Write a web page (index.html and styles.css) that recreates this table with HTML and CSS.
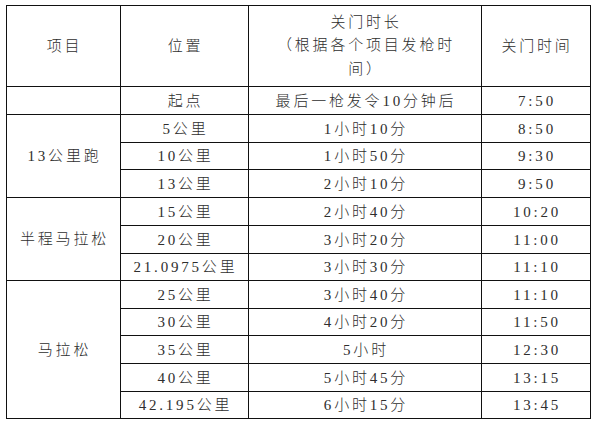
FILE: index.html
```html
<!DOCTYPE html>
<html lang="zh-CN">
<head>
<meta charset="utf-8">
<link rel="stylesheet" href="styles.css">
</head>
<body>
<table class="cutoff">
  <colgroup>
    <col class="c1"><col class="c2"><col class="c3"><col class="c4">
  </colgroup>
  <tr class="head">
    <td>项目</td>
    <td>位置</td>
    <td class="multi">关门时长<br>（根据各个项目发枪时<br>间）</td>
    <td>关门时间</td>
  </tr>
  <tr class="h28"><td></td><td>起点</td><td>最后一枪发令10分钟后</td><td>7:50</td></tr>
  <tr class="h28"><td rowspan="3">13公里跑</td><td>5公里</td><td>1小时10分</td><td>8:50</td></tr>
  <tr class="h27"><td>10公里</td><td>1小时50分</td><td>9:30</td></tr>
  <tr class="h28"><td>13公里</td><td>2小时10分</td><td>9:50</td></tr>
  <tr class="h28"><td rowspan="3">半程马拉松</td><td>15公里</td><td>2小时40分</td><td>10:20</td></tr>
  <tr class="h28"><td>20公里</td><td>3小时20分</td><td>11:00</td></tr>
  <tr class="h27"><td>21.0975公里</td><td>3小时30分</td><td>11:10</td></tr>
  <tr class="h28"><td rowspan="5">马拉松</td><td>25公里</td><td>3小时40分</td><td>11:10</td></tr>
  <tr class="h27"><td>30公里</td><td>4小时20分</td><td>11:50</td></tr>
  <tr class="h28"><td>35公里</td><td>5小时</td><td>12:30</td></tr>
  <tr class="h28"><td>40公里</td><td>5小时45分</td><td>13:15</td></tr>
  <tr class="h27"><td>42.195公里</td><td>6小时15分</td><td>13:45</td></tr>
</table>
</body>
</html>
```

FILE: styles.css
```css
html, body {
  margin: 0;
  background: #ffffff;
}
body {
  padding: 5px 0 0 6px;
  font-family: "Liberation Serif", "Noto Sans CJK SC", serif;
  font-size: 15px;
  font-weight: 300;
  color: #2e2e2e;
}
.cutoff {
  border-collapse: separate;
  border-spacing: 0;
  table-layout: fixed;
  width: 585px;
  border-top: 1px solid #111111;
  border-left: 1px solid #111111;
}
.c1 { width: 114px; }
.c2 { width: 128px; }
.c3 { width: 233px; }
.c4 { width: 109px; }
.cutoff td {
  box-sizing: border-box;
  border-right: 1px solid #111111;
  border-bottom: 1px solid #111111;
  padding: 0 0 0 2px;
  text-align: center;
  vertical-align: middle;
  letter-spacing: 2.8px;
  line-height: 20px;
  white-space: nowrap;
}
.head td { height: 81px; }
.head td.multi { line-height: 23.5px; }
.h28 td { height: 28px; }
.h27 td { height: 27px; }
```
